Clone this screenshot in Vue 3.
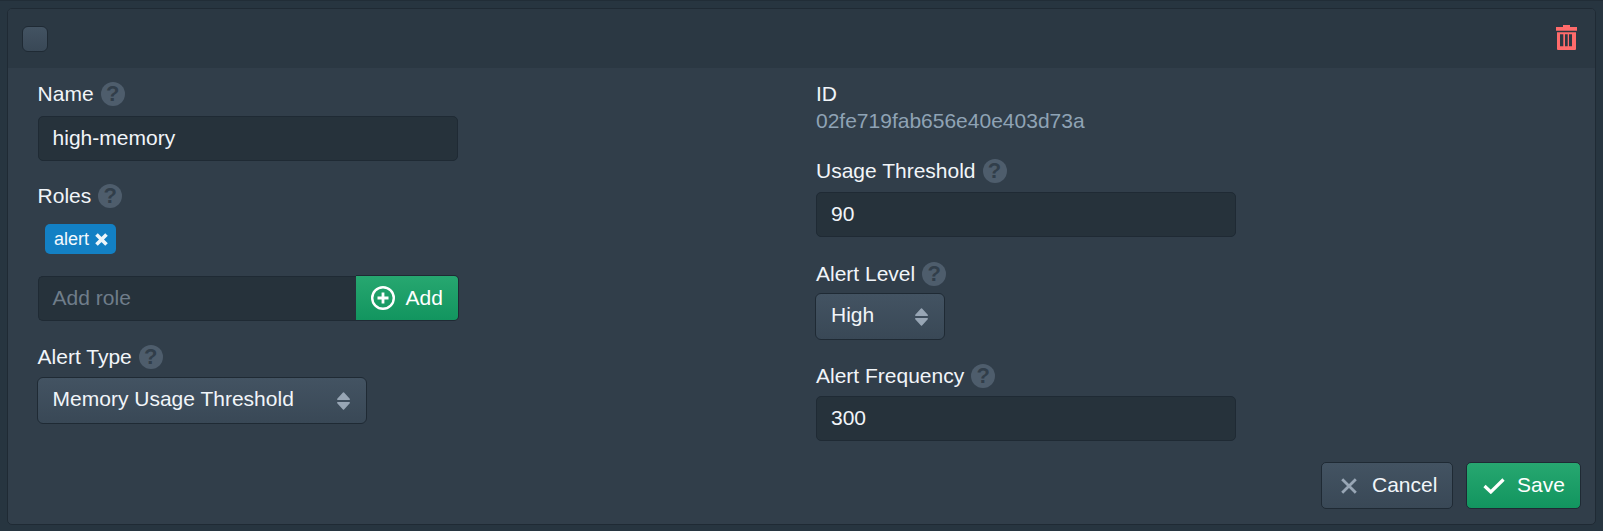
<template>
  <div class="page">
    <section class="card">
      <header class="card-head">
        <span class="check"></span>
        <svg class="trash" viewBox="0 0 21 25" aria-hidden="true">
          <path fill="#ff6b6b" fill-rule="evenodd" d="M7 0h7v2h7v3.700H0V2h7zM1 7.200h19V24a1 1 0 0 1-1 1H2a1 1 0 0 1-1-1zm3 2v12h3.300v-12zm5 0v12h2.700v-12zm4 0v12h3v-12z"/>
        </svg>
      </header>
      <div class="card-body">
        <div class="cols">
          <div class="col">
            <div class="field f-name">
              <div class="label l-name">Name <span class="help">?</span></div>
              <div class="input">high-memory</div>
            </div>
            <div class="field f-roles">
              <div class="label l-roles">Roles <span class="help">?</span></div>
              <div class="tags">
                <span class="tag">alert
                  <svg class="tag-x" viewBox="0 0 13 13"><path d="M1.500 1.500l10 10M11.500 1.500l-10 10" stroke="#eef5fa" stroke-width="3.600" fill="none"/></svg>
                </span>
              </div>
              <div class="addon">
                <div class="input grow placeholder">Add role</div>
                <button class="btn green add">
                  <svg class="plus" viewBox="0 0 24 24"><circle cx="12" cy="12" r="10.800" fill="none" stroke="#fff" stroke-width="2.400"/><path d="M12 6.500v11M6.500 12h11" stroke="#fff" stroke-width="2.800"/></svg>
                  <span class="add-text">Add</span>
                </button>
              </div>
            </div>
            <div class="field">
              <div class="label l-type">Alert Type <span class="help">?</span></div>
              <div class="select wide">Memory Usage Threshold
                <svg class="arrows" viewBox="0 0 13 18"><path fill="#98a6b5" stroke="#98a6b5" stroke-width="1.500" stroke-linejoin="round" d="M6.500 1L12.200 7.200H.8zM6.500 17L.8 10.800h11.400z"/></svg>
              </div>
            </div>
          </div>
          <div class="col">
            <div class="field f-id">
              <div class="label l-id">ID</div>
              <div class="id-value">02fe719fab656e40e403d73a</div>
            </div>
            <div class="field f-usage">
              <div class="label">Usage Threshold <span class="help">?</span></div>
              <div class="input">90</div>
            </div>
            <div class="field f-level">
              <div class="label l-sel">Alert Level <span class="help">?</span></div>
              <div class="select narrow">High
                <svg class="arrows" viewBox="0 0 13 18"><path fill="#98a6b5" stroke="#98a6b5" stroke-width="1.500" stroke-linejoin="round" d="M6.500 1L12.200 7.200H.8zM6.500 17L.8 10.800h11.400z"/></svg>
              </div>
            </div>
            <div class="field">
              <div class="label l-freq">Alert Frequency <span class="help">?</span></div>
              <div class="input">300</div>
            </div>
          </div>
        </div>
        <footer class="actions">
          <button class="btn dark">
            <svg class="x" viewBox="0 0 16 16"><path d="M1.200 1.200l13.600 13.600M14.800 1.200L1.200 14.800" stroke="#98a6b5" stroke-width="2.800" fill="none"/></svg>
            <span class="btn-text">Cancel</span>
          </button>
          <button class="btn green save">
            <svg class="ok" viewBox="0 0 22 16"><path d="M1.500 8l6.300 6L20.500 1.500" stroke="#fff" stroke-width="3.200" fill="none"/></svg>
            <span class="btn-text">Save</span>
          </button>
        </footer>
      </div>
    </section>
  </div>
</template>

<script setup>
</script>

<style>
html, body { margin: 0; background: #273540; }
</style>

<style scoped>
.page {
  height: 531px;
  box-sizing: border-box;
  padding: 7px 7px 0 7px;
  font-family: "Liberation Sans", Arial, sans-serif;
  font-size: 21px;
  color: #f1f5f9;
  border-top: 1px solid #212d37;
}
.card {
  height: 517px;
  box-sizing: border-box;
  border: 1px solid #1f2a34;
  border-radius: 5px;
  background: #313e4a;
  overflow: hidden;
}
.card-head {
  height: 59px;
  background: #2b3843;
  display: flex;
  align-items: center;
  justify-content: space-between;
  padding: 0 18px 0 14px;
}
.check {
  width: 26px;
  height: 26px;
  box-sizing: border-box;
  border: 1px solid #1f2a34;
  border-radius: 6px;
  background: linear-gradient(#435362, #394856);
}
.trash { width: 21px; height: 25px; margin-top: -2px; }
.card-body { padding: 14px 14px 0 29.6px; }
.cols { display: grid; grid-template-columns: 778.400px 1fr; }
.label {
  display: flex;
  align-items: center;
  gap: 7px;
  height: 24px;
  line-height: 24px;
  margin-bottom: 9px;
}
.l-name { margin-bottom: 10px; }
.l-roles { margin-bottom: 16px; }
.l-sel { margin-bottom: 7px; }
.l-type { margin-top: -1px; margin-bottom: 8px; }
.l-freq { margin-bottom: 8px; }
.l-id { margin-bottom: 3px; }
.help {
  width: 24px;
  height: 24px;
  border-radius: 50%;
  background: #4e5d6c;
  color: #313e4a;
  font-weight: 700;
  font-size: 22px;
  display: flex;
  align-items: center;
  justify-content: center;
}
.input {
  width: 420px;
  height: 45px;
  box-sizing: border-box;
  border: 1px solid #1f2a34;
  border-radius: 5px;
  background: #26323b;
  padding: 0 14px;
  line-height: 41px;
}
.f-name { margin-bottom: 23px; }
.f-roles { margin-bottom: 25px; }
.f-id { margin-bottom: 26px; }
.f-usage { margin-bottom: 25px; }
.f-level { margin-bottom: 24px; }
.tags { padding: 0 7px; margin-bottom: 21px; height: 30px; }
.tag {
  display: inline-flex;
  align-items: center;
  gap: 5.5px;
  height: 30px;
  padding: 0 8px 0 9.4px;
  border-radius: 5px;
  background: #1380c4;
  color: #f4f9fd;
  font-size: 18px;
}
.tag-x { width: 13px; height: 13px; }
.addon { display: flex; width: 421px; }
.grow { flex: 1; width: auto; border-radius: 5px 0 0 5px; border-right: 0; margin-top: 1px; }
.placeholder { color: #6f7d8a; }
.btn {
  display: inline-flex;
  align-items: center;
  box-sizing: border-box;
  border: 1px solid #1f2a34;
  border-radius: 5px;
  font: inherit;
  color: #f1f5f9;
  height: 47px;
  padding: 0;
}
.green { background: linear-gradient(#27a770, #12955f); color: #fff; }
.dark { background: linear-gradient(#435362, #394856); }
.add { width: 103px; height: 46px; border-radius: 0 5px 5px 0; padding-left: 15px; gap: 11px; border-left: 0; }
.add-text { margin-top: -1px; }
.btn-text { margin-top: -2px; }
.plus { width: 24px; height: 24px; }
.select {
  position: relative;
  height: 47px;
  box-sizing: border-box;
  border: 1px solid #1f2a34;
  border-radius: 6px;
  background: linear-gradient(#435362, #394856);
  padding-left: 15px;
  line-height: 41px;
}
.wide { width: 330px; margin-left: -1px; }
.narrow { width: 130px; margin-left: -1px; }
.arrows { position: absolute; right: 16px; top: 14px; width: 13px; height: 18px; }
.id-value { color: #8fa3b5; height: 24px; line-height: 24px; }
.actions { display: flex; justify-content: flex-end; gap: 13px; margin-top: 21px; }
.actions .dark { width: 132px; padding-left: 19px; gap: 15px; }
.actions .save { width: 115px; padding-left: 16px; gap: 12px; }
.x { width: 16px; height: 16px; }
.ok { width: 22px; height: 16px; }
</style>
